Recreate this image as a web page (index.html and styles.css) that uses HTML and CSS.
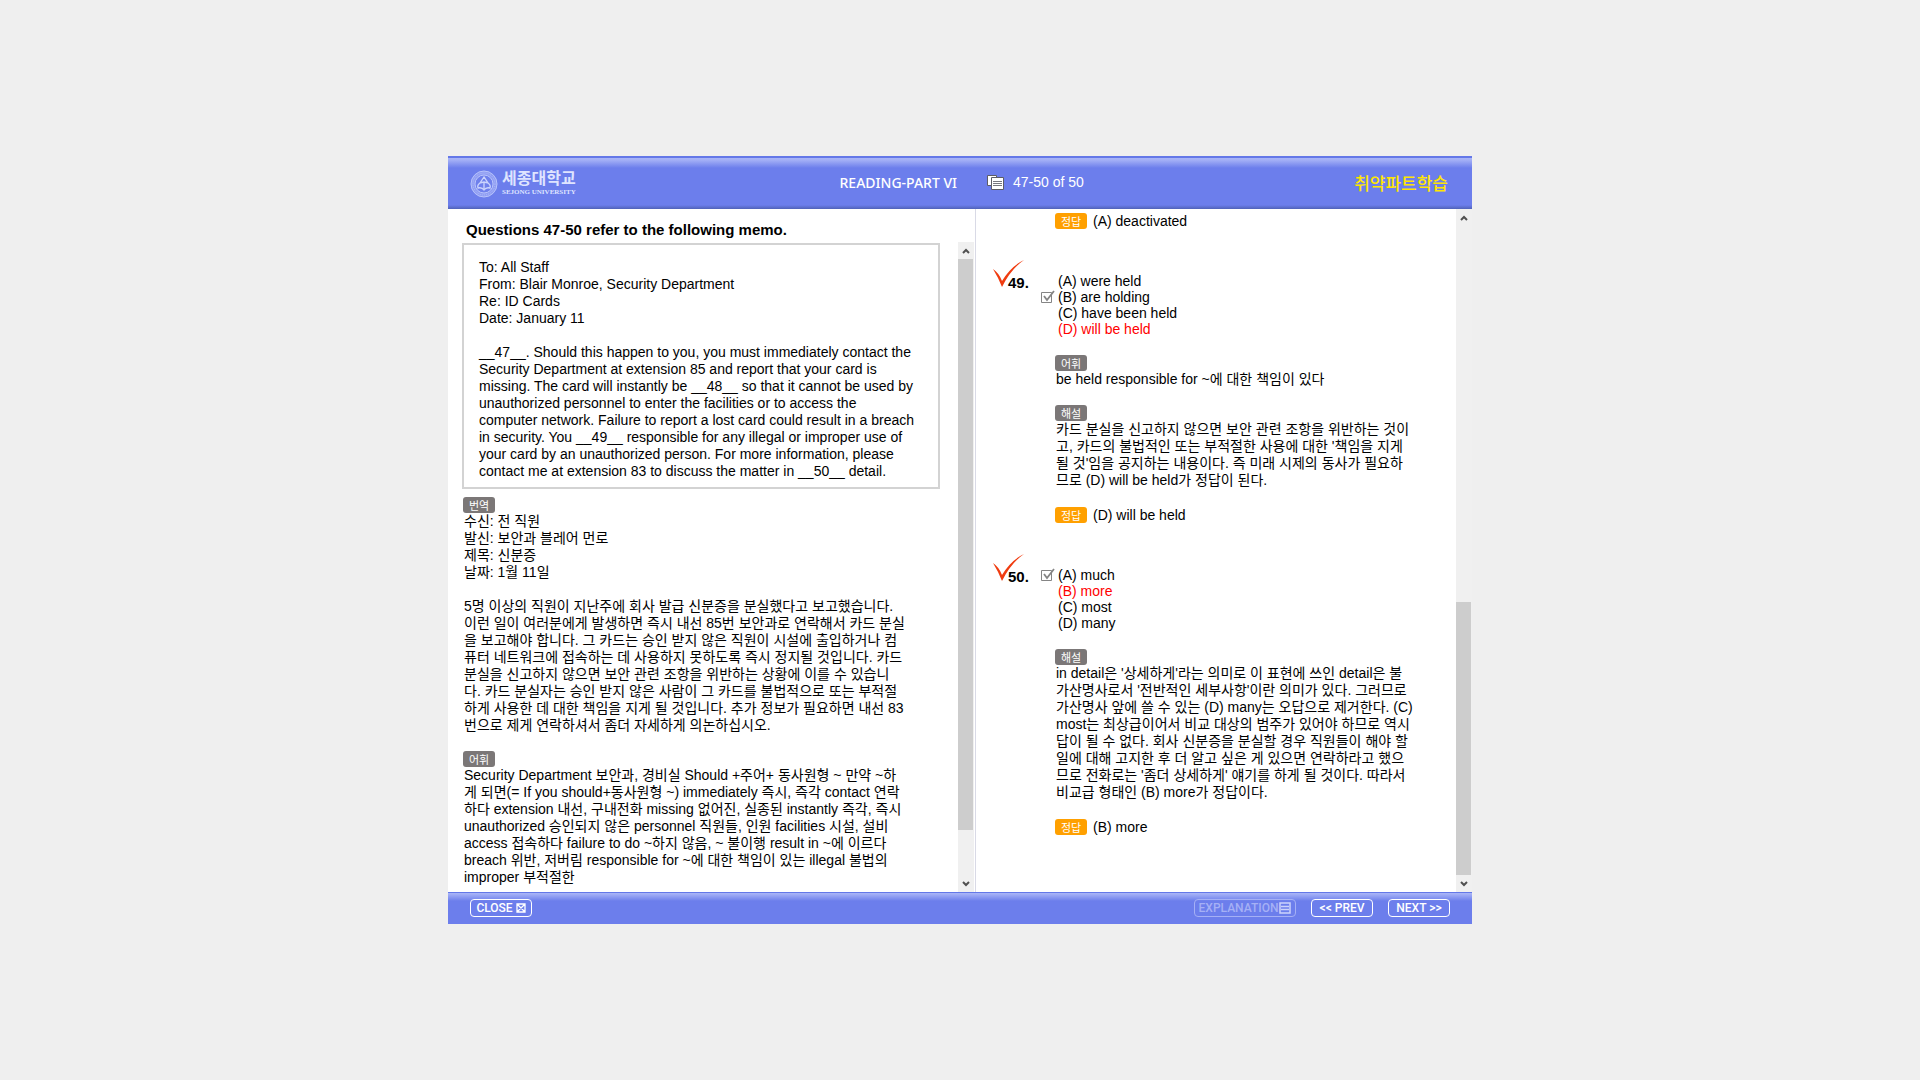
FILE: index.html
```html
<!DOCTYPE html>
<html lang="ko">
<head>
<meta charset="utf-8">
<meta name="viewport" content="width=device-width, initial-scale=1">
<title>READING-PART VI</title>
<link rel="stylesheet" href="styles.css">
</head>
<body>
<div class="app">
  <header class="header">
    <div class="header-left">
      <div class="logo">
        <svg class="seal" viewBox="0 0 28 28" aria-hidden="true">
          <circle cx="14" cy="14" r="13" fill="#8f9df3" stroke="#b9c4fb" stroke-width="1"/>
          <circle cx="14" cy="14" r="11" fill="none" stroke="#b5c0fa" stroke-width="1" stroke-dasharray="1 1"/>
          <circle cx="14" cy="14" r="9" fill="#6f80ec" stroke="#b9c4fb" stroke-width="1"/>
          <path d="M14 7 L10 13 L14 12 L18 13 Z M14 12 V19 M10 13 Q7 15 8 18 Q12 17 14 20 Q16 17 20 18 Q21 15 18 13" fill="none" stroke="#ccd4fd" stroke-width="1.300"/>
        </svg>
        <div class="logo-text">
          <span class="logo-ko">세종대학교</span>
          <span class="logo-en">SEJONG UNIVERSITY</span>
        </div>
      </div>
      <h1 class="part">READING-PART VI</h1>
    </div>
    <div class="header-right">
      <div class="progress">
        <svg class="pages" viewBox="0 0 18 16" aria-hidden="true">
          <path d="M0.500 0.500H9.500V10.500H0.500Z" fill="#fff" stroke="#5c5c66" stroke-width="1"/>
          <path d="M4.500 2.500H16.500V14.500H4.500Z" fill="#fff" stroke="#5c5c66" stroke-width="1"/>
          <path d="M6 6.500H15M6 8.500H15M6 10.500H15" stroke="#77777f" stroke-width="1"/>
        </svg>
        <span>47-50 of 50</span>
      </div>
      <span class="mode">취약파트학습</span>
    </div>
  </header>

  <main class="body">
    <section class="pane pane-left">
      <h2 class="title">Questions 47-50 refer to the following memo.</h2>
      <div class="scroller">
        <div class="passage">
          <div class="memo">
            <p>To: All Staff<br>From: Blair Monroe, Security Department<br>Re: ID Cards<br>Date: January 11</p>
            <p>__47__. Should this happen to you, you must immediately contact the<br>Security Department at extension 85 and report that your card is<br>missing. The card will instantly be __48__ so that it cannot be used by<br>unauthorized personnel to enter the facilities or to access the<br>computer network. Failure to report a lost card could result in a breach<br>in security. You __49__ responsible for any illegal or improper use of<br>your card by an unauthorized person. For more information, please<br>contact me at extension 83 to discuss the matter in __50__ detail.</p>
          </div>
          <div class="note">
            <span class="badge">번역</span>
            <p>수신: 전 직원<br>발신: 보안과 블레어 먼로<br>제목: 신분증<br>날짜: 1월 11일</p>
            <p>5명 이상의 직원이 지난주에 회사 발급 신분증을 분실했다고 보고했습니다.<br>이런 일이 여러분에게 발생하면 즉시 내선 85번 보안과로 연락해서 카드 분실<br>을 보고해야 합니다. 그 카드는 승인 받지 않은 직원이 시설에 출입하거나 컴<br>퓨터 네트워크에 접속하는 데 사용하지 못하도록 즉시 정지될 것입니다. 카드<br>분실을 신고하지 않으면 보안 관련 조항을 위반하는 상황에 이를 수 있습니<br>다. 카드 분실자는 승인 받지 않은 사람이 그 카드를 불법적으로 또는 부적절<br>하게 사용한 데 대한 책임을 지게 될 것입니다. 추가 정보가 필요하면 내선 83<br>번으로 제게 연락하셔서 좀더 자세하게 의논하십시오.</p>
          </div>
          <div class="note">
            <span class="badge">어휘</span>
            <p>Security Department 보안과, 경비실 Should +주어+ 동사원형 ~ 만약 ~하<br>게 되면(= If you should+동사원형 ~) immediately 즉시, 즉각 contact 연락<br>하다 extension 내선, 구내전화 missing 없어진, 실종된 instantly 즉각, 즉시<br>unauthorized 승인되지 않은 personnel 직원들, 인원 facilities 시설, 설비<br>access 접속하다 failure to do ~하지 않음, ~ 불이행 result in ~에 이르다<br>breach 위반, 저버림 responsible for ~에 대한 책임이 있는 illegal 불법의<br>improper 부적절한</p>
          </div>
        </div>
        <div class="scrollbar">
          <button class="arrow" aria-label="위로"><svg viewBox="0 0 8 6"><path d="M1 5L4 2L7 5" fill="none" stroke="#505050" stroke-width="2"/></svg></button>
          <div class="track">
            <div class="thumb thumb-left"></div>
            <div class="rest-left"></div>
          </div>
          <button class="arrow" aria-label="아래로"><svg viewBox="0 0 8 6"><path d="M1 1L4 4L7 1" fill="none" stroke="#505050" stroke-width="2"/></svg></button>
        </div>
      </div>
    </section>

    <section class="pane pane-right">
      <div class="questions">
        <div class="answer answer-first"><span class="badge badge-answer">정답</span><span>(A) deactivated</span></div>

        <article class="question">
          <div class="number">
            <svg class="mark" viewBox="0 0 32 28" aria-hidden="true"><path d="M1 9Q7 13 10 21Q19 6 32 0Q19 9 10 27Q6 17 1 9Z" fill="#f03c10"/></svg>
            49.
          </div>
          <div class="content">
            <div class="options">
              <label class="option"><span class="tick"><input type="radio" name="q49"></span>(A) were held</label>
              <label class="option"><span class="tick"><input type="radio" name="q49" checked><svg viewBox="0 0 14 14"><path d="M0.500 2.500H10.500V12.500H0.500Z" fill="#fff" stroke="#858585" stroke-width="1"/><path d="M3 6L6 10L13 1" fill="none" stroke="#858585" stroke-width="1.800"/></svg></span>(B) are holding</label>
              <label class="option"><span class="tick"><input type="radio" name="q49"></span>(C) have been held</label>
              <label class="option correct"><span class="tick"><input type="radio" name="q49"></span>(D) will be held</label>
            </div>
            <div class="note">
              <span class="badge">어휘</span>
              <p>be held responsible for ~에 대한 책임이 있다</p>
            </div>
            <div class="note">
              <span class="badge">해설</span>
              <p>카드 분실을 신고하지 않으면 보안 관련 조항을 위반하는 것이<br>고, 카드의 불법적인 또는 부적절한 사용에 대한 '책임을 지게<br>될 것'임을 공지하는 내용이다. 즉 미래 시제의 동사가 필요하<br>므로 (D) will be held가 정답이 된다.</p>
            </div>
            <div class="answer"><span class="badge badge-answer">정답</span><span>(D) will be held</span></div>
          </div>
        </article>

        <article class="question">
          <div class="number">
            <svg class="mark" viewBox="0 0 32 28" aria-hidden="true"><path d="M1 9Q7 13 10 21Q19 6 32 0Q19 9 10 27Q6 17 1 9Z" fill="#f03c10"/></svg>
            50.
          </div>
          <div class="content">
            <div class="options">
              <label class="option"><span class="tick"><input type="radio" name="q50" checked><svg viewBox="0 0 14 14"><path d="M0.500 2.500H10.500V12.500H0.500Z" fill="#fff" stroke="#858585" stroke-width="1"/><path d="M3 6L6 10L13 1" fill="none" stroke="#858585" stroke-width="1.800"/></svg></span>(A) much</label>
              <label class="option correct"><span class="tick"><input type="radio" name="q50"></span>(B) more</label>
              <label class="option"><span class="tick"><input type="radio" name="q50"></span>(C) most</label>
              <label class="option"><span class="tick"><input type="radio" name="q50"></span>(D) many</label>
            </div>
            <div class="note">
              <span class="badge">해설</span>
              <p>in detail은 '상세하게'라는 의미로 이 표현에 쓰인 detail은 불<br>가산명사로서 '전반적인 세부사항'이란 의미가 있다. 그러므로<br>가산명사 앞에 쓸 수 있는 (D) many는 오답으로 제거한다. (C)<br>most는 최상급이어서 비교 대상의 범주가 있어야 하므로 역시<br>답이 될 수 없다. 회사 신분증을 분실할 경우 직원들이 해야 할<br>일에 대해 고지한 후 더 알고 싶은 게 있으면 연락하라고 했으<br>므로 전화로는 '좀더 상세하게' 얘기를 하게 될 것이다. 따라서<br>비교급 형태인 (B) more가 정답이다.</p>
            </div>
            <div class="answer"><span class="badge badge-answer">정답</span><span>(B) more</span></div>
          </div>
        </article>
      </div>
      <div class="scrollbar">
        <button class="arrow" aria-label="위로"><svg viewBox="0 0 8 6"><path d="M1 5L4 2L7 5" fill="none" stroke="#505050" stroke-width="2"/></svg></button>
        <div class="track">
          <div class="rest-right"></div>
          <div class="thumb thumb-right"></div>
        </div>
        <button class="arrow" aria-label="아래로"><svg viewBox="0 0 8 6"><path d="M1 1L4 4L7 1" fill="none" stroke="#505050" stroke-width="2"/></svg></button>
      </div>
    </section>
  </main>

  <footer class="footer">
    <button class="btn">CLOSE
      <svg viewBox="0 0 10 10" aria-hidden="true"><path d="M1 1H9V9H1ZM1 1L9 9M9 1L1 9" fill="none" stroke="#fff" stroke-width="1.300"/></svg>
    </button>
    <div class="footer-right">
      <button class="btn btn-wide" disabled>EXPLANATION<svg class="sheet" viewBox="0 0 12 12" aria-hidden="true"><path d="M1 1H11V11H1ZM2 4.500H10M2 7.500H10" fill="none" stroke="#ccd3fb" stroke-width="1.500"/></svg></button>
      <button class="btn">&lt;&lt; PREV</button>
      <button class="btn">NEXT &gt;&gt;</button>
    </div>
  </footer>
</div>
</body>
</html>
```
FILE: styles.css
```css
* {
  box-sizing: border-box;
}

body {
  margin: 0;
  min-height: 100vh;
  display: flex;
  align-items: center;
  justify-content: center;
  background: #efefef;
  color: #000;
  font: 14px/17px "Liberation Sans", "Noto Sans CJK KR", sans-serif;
}

h1, h2, p {
  margin: 0;
}

button {
  margin: 0;
  padding: 0;
  border: 0;
  background: none;
}

.app {
  width: 100%;
  max-width: 1024px;
  background: #fff;
}

/* Header */

.header {
  height: 53px;
  display: grid;
  grid-template-columns: 527fr 497fr;
  color: #fff;
  background:
    linear-gradient(to top, #5062b8, #6c7eec 4px, transparent 4px),
    linear-gradient(to bottom, #6478e8 2px, #a9b5f7 2px, #a4b0f6 4px, #6c7eec 12px);
}

.header-left,
.header-right {
  display: flex;
  align-items: center;
  justify-content: space-between;
}

.header-left {
  padding-left: 22px;
  padding-right: 18px;
}

.header-right {
  padding-left: 12px;
  padding-right: 24px;
}

.logo {
  display: flex;
  align-items: center;
  gap: 4px;
  padding-top: 2px;
}

.seal {
  width: 28px;
  height: 28px;
}

.logo-text {
  display: flex;
  flex-direction: column;
  color: #dfe4ff;
}

.logo-ko {
  font-size: 16px;
  line-height: 18px;
  font-weight: 700;
}

.logo-en {
  font: bold 7px/9px "Liberation Serif", serif;
}

.part {
  font: 500 14px/20px "Noto Sans", sans-serif;
}

.progress {
  display: flex;
  align-items: center;
  gap: 8px;
}

.pages {
  width: 18px;
  height: 16px;
}

.mode {
  padding-top: 4px;
  color: #ffe600;
  font-size: 17px;
  line-height: 20px;
  font-weight: 500;
}

/* Two panes */

.body {
  display: grid;
  grid-template-columns: 528fr 496fr;
}

.pane-left {
  display: flex;
  flex-direction: column;
  border-right: 1px solid #d9dae6;
}

.title {
  padding: 12px 0 4px 18px;
  font-size: 15px;
  line-height: 17px;
  font-weight: bold;
}

.scroller {
  flex: 1;
  display: flex;
  padding-right: 1px;
}

.passage {
  flex: 1;
  padding: 1px 18px 6px 14px;
}

.memo {
  padding: 14px 0 7px 15px;
  margin-bottom: 8px;
  border: 2px solid #d3d3d3;
}

.memo p + p,
.note p + p,
.note + .note {
  margin-top: 17px;
}

.passage .note {
  padding-left: 1px;
}

.note p {
  padding-left: 1px;
}

.badge {
  display: block;
  width: 32px;
  height: 16px;
  border-radius: 3px;
  background: #7b7777;
  color: #fff;
  font: 11px/16px "Noto Sans CJK KR", sans-serif;
  text-align: center;
}

.badge-answer {
  background: #ffa000;
}

/* Questions */

.pane-right {
  display: flex;
}

.questions {
  flex: 1;
  padding-top: 4px;
}

.answer {
  display: flex;
  gap: 6px;
  margin-top: 18px;
  line-height: 16px;
}

.answer-first {
  margin-top: 0;
  padding-left: 79px;
}

.question {
  display: grid;
  grid-template-columns: 64px 1fr;
  margin-top: 44px;
}

.number {
  position: relative;
  padding-left: 32px;
  font-size: 15px;
  line-height: 20px;
  font-weight: bold;
}

.mark {
  position: absolute;
  left: 16px;
  top: -13px;
  width: 32px;
  height: 28px;
}

.content {
  padding-left: 15px;
}

.options {
  margin-left: -15px;
  margin-bottom: 18px;
}

.option {
  display: flex;
  align-items: center;
  gap: 3px;
  line-height: 16px;
}

.correct {
  color: #f00;
}

.tick {
  position: relative;
  width: 15px;
  height: 14px;
}

.tick input {
  position: absolute;
  inset: 0;
  margin: 0;
  opacity: 0;
}

.tick svg {
  display: block;
  width: 14px;
  height: 14px;
  margin-left: 1px;
}

/* Scrollbars */

.scrollbar {
  width: 16px;
  display: flex;
  flex-direction: column;
  background: #f0f0f0;
}

.arrow {
  height: 17px;
  display: flex;
  align-items: center;
  justify-content: center;
}

.arrow svg {
  width: 8px;
  height: 6px;
}

.track {
  flex: 1;
  display: flex;
  flex-direction: column;
}

.thumb {
  margin-right: 1px;
  background: #cdcdcd;
}

.thumb-left {
  flex: 571;
}

.rest-left {
  flex: 45;
}

.rest-right {
  flex: 376;
}

.thumb-right {
  flex: 273;
}

/* Footer */

.footer {
  height: 32px;
  display: flex;
  align-items: center;
  justify-content: space-between;
  padding: 0 22px;
  background: linear-gradient(to bottom, #6478e8 1px, #a9b5f7 1px, #a4b0f6 2px, #6c7eec 9px);
}

.footer-right {
  display: flex;
  gap: 15px;
}

.btn {
  width: 62px;
  height: 18px;
  display: flex;
  align-items: center;
  justify-content: center;
  gap: 3px;
  border: 1px solid #fff;
  border-radius: 4px;
  color: #fff;
  font: 500 12px/16px Roboto, sans-serif;
}

.btn svg {
  width: 10px;
  height: 10px;
}

.btn .sheet {
  width: 12px;
  height: 12px;
}

.btn-wide {
  width: 102px;
  gap: 1px;
}

.btn:disabled {
  border-color: #a5b0f5;
  color: #a5b0f5;
}
```
